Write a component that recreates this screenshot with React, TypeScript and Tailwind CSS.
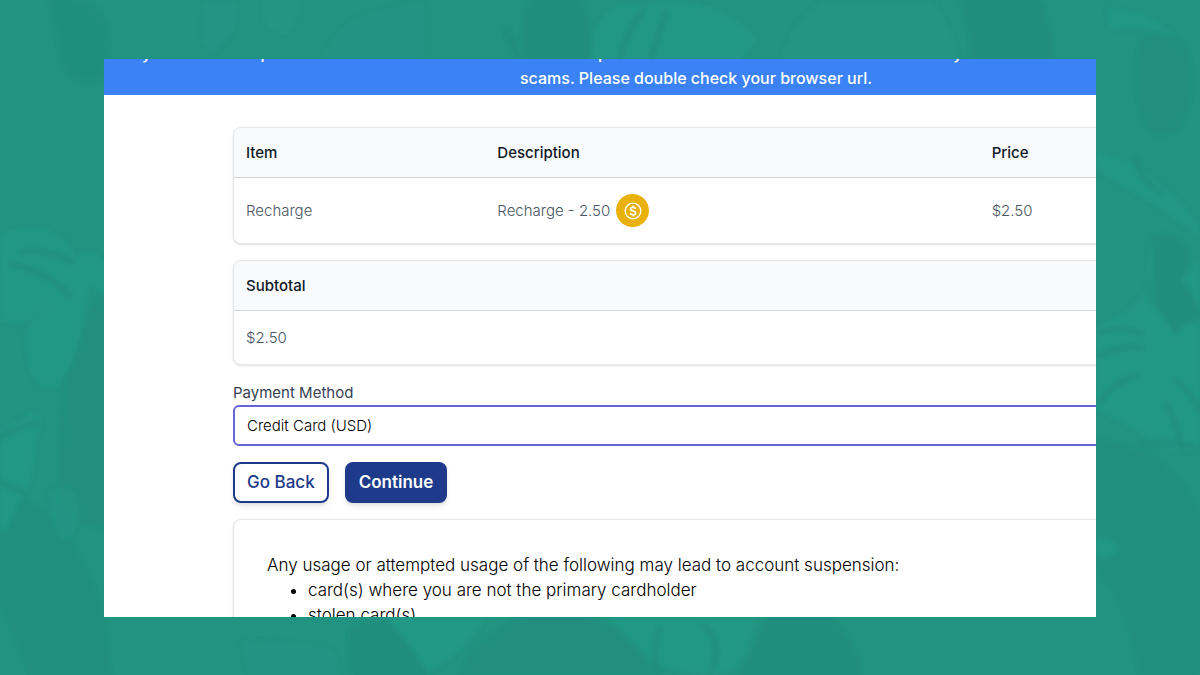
import type { ReactNode } from "react";

const items = [{ name: "Recharge", description: "Recharge - 2.50", price: "$2.50" }];

const methods = ["Credit Card (USD)"];

const prohibited = ["card(s) where you are not the primary cardholder", "stolen card(s)"];

// Tropical leaves behind the page, slightly lighter or darker than the base green.
function Leaves() {
  return (
    <svg
      aria-hidden="true"
      className="absolute inset-0 size-full"
      viewBox="0 0 1200 675"
      preserveAspectRatio="xMidYMid slice"
    >
      <defs>
        <filter id="soft" x="-5%" y="-5%" width="110%" height="110%">
          <feGaussianBlur stdDeviation="2" />
        </filter>
      </defs>
      <g filter="url(#soft)" opacity=".8">
        <g fill="#228c7c">
          <path d="M50 0q40-6 55 20 10 30-4 60-30 10-40-20z" opacity=".6" />
          <path d="M530 0h50q14 30 12 60h-66q-8-30 4-60z" />
          <path d="M960 0h80q10 30 14 60h-84q4-30-10-60z" />
          <path d="M85 320q20-34 24-30v240q-50-10-50-40 4-60 4-110z" opacity=".7" />
          <path d="M1140 40q60-20 50 60-10 40-34 34-28-20-16-94z" opacity=".7" />
          <path d="M1152 236q30-6 36 20 0 30 14 60l-26 20-18-24z" />
          <path d="M350 630q30-13 50-13 24 30 28 58h-78z" />
          <path d="M520 617h70q50 20 60 58H460q10-30 60-58z" opacity=".7" />
          <path d="M770 617h60q30 30 30 58H740z" />
          <path d="M0 490q60 20 80 70 26 40 30 115H30L0 600z" opacity=".5" />
          <path d="M1096 440q80 10 104 80v155h-60q-10-70-44-110z" opacity=".5" />
        </g>
        <g fill="#239987">
          <path d="M0 234c36-12 64-6 76 22 12-8 24-4 33 10v30l-20-10c-4 40-14 84-34 102-22 4-32-20-28-62L48 306 22 326 0 320z" />
          <path d="M0 430l36-20 6 8-8 40q-2 30-10 36L0 480z" />
          <path d="M0 486l22 8-14 34-8 4z" />
          <path d="M48 490q30-10 31 20-2 30-16 30-12-4-15-50z" opacity=".5" />
          <path d="M205 0l32 4q0 20-6 32l-18 18q-14-14-12-24z" opacity=".7" />
          <path d="M262 0h40q-6 24-14 34-20 0-24-14z" opacity=".6" />
          <path d="M320 62q16-40 50-50l54-10v60z" opacity=".5" />
          <path d="M590 62q0-50 34-58l46-4q60 4 88 40l-20 22z" />
          <path d="M780 62q14-50 44-60h110q20 30 26 60z" opacity=".6" />
          <path d="M1106 8q40 0 70 28-30-10-66-6z" />
          <path d="M1096 150q60 16 104 76v12q-50-40-104-66z" />
          <path d="M1150 240q4 30-6 54-24 26-48 30v86q30 12 60 34 20 10 44 6V320q-24 4-24 18-10-26-30-36z" />
          <path d="M1182 280q12-20 18-22v50z" />
          <path d="M1096 536q20 4 22 14-10 12-22 6z" />
          <path d="M386 617h100q-14 30-58 56-20-30-42-56z" />
          <path d="M610 617h150q-10 30-24 52-40 16-84-8-20-20-42-44z" />
          <path d="M240 640q60 0 94 10l6 25h-90z" opacity=".5" />
        </g>
        <g fill="none" stroke="#228b7b" strokeWidth="4" strokeLinecap="round">
          <path d="M12 264q40 10 58 32M20 252q30-4 52 10M0 438q14-12 38-14M0 482l24 10" />
          <path d="M1100 332q20-6 42 2M1100 356q20-12 42-8M1100 402q14-20 36-26M1166 404q12 20 16 44M1176 380q16 14 24 30M1140 444q30-4 60 4" />
          <path d="M620 60q6-30 24-50M650 60l16-48M660 628q-10 24-2 46M704 625q20 20 8 44" />
          <path d="M506 30l14 30M1136 160q0 14 24 32" />
        </g>
      </g>
    </svg>
  );
}

function Coin() {
  return (
    <span className="flex size-[33px] items-center justify-center rounded-full bg-[#e9b10b] text-white">
      <svg aria-hidden="true" viewBox="0 0 24 24" fill="none" stroke="currentColor" className="size-5">
        <circle cx="12" cy="12" r="9.4" strokeWidth="1.6" />
        <path
          d="M15 9.4C14.6 8.2 13.5 7.6 12 7.6c-1.8 0-3 .8-3 2.1 0 3.1 6.2 1.5 6.2 4.6 0 1.3-1.3 2.2-3.2 2.2-1.7 0-2.9-.7-3.3-2M12 5.6v2M12 16.4v2"
          strokeWidth="2"
        />
      </svg>
    </span>
  );
}

function Banner() {
  return (
    <div className="bg-[#3b82f6] pb-1 text-center text-base leading-[25px] font-medium text-white">
      <p>
        Any other online operators that do not match the trusted store presented here on this
        official notice board may contain unsafe links and are considered
        <br />
        scams. Please double check your browser url.
      </p>
    </div>
  );
}

function Card({ children }: { children: ReactNode }) {
  return (
    <div className="overflow-hidden rounded-lg border border-gray-200 bg-white shadow-sm">
      {children}
    </div>
  );
}

const th = "px-3 py-3 text-left font-medium text-gray-900";
const td = "px-3 text-gray-600";

function Checkout() {
  return (
    <form className="flex flex-col gap-4 px-[129px] pt-8 text-[15px] leading-[25px] font-light">
      <Card>
        <table className="w-full table-fixed">
          <thead className="border-b border-gray-300 bg-slate-50">
            <tr>
              <th className={`w-[27.2%] ${th}`}>Item</th>
              <th className={`w-[53.5%] ${th}`}>Description</th>
              <th className={th}>Price</th>
            </tr>
          </thead>
          <tbody>
            {items.map((item) => (
              <tr key={item.name}>
                <td className={`py-4 ${td}`}>{item.name}</td>
                <td className={`py-4 ${td}`}>
                  <span className="flex items-center gap-1.5">
                    {item.description}
                    <Coin />
                  </span>
                </td>
                <td className={`py-4 ${td}`}>{item.price}</td>
              </tr>
            ))}
          </tbody>
        </table>
      </Card>

      <Card>
        <table className="w-full">
          <thead className="border-b border-gray-300 bg-slate-50">
            <tr>
              <th className={th}>Subtotal</th>
            </tr>
          </thead>
          <tbody>
            <tr>
              <td className={`py-[14px] ${td}`}>$2.50</td>
            </tr>
          </tbody>
        </table>
      </Card>

      <div>
        <label htmlFor="method" className="block leading-6 font-normal text-gray-700">
          Payment Method
        </label>
        <select
          id="method"
          className="block h-[41px] w-full appearance-none rounded-md border-2 border-[#6663dc] bg-white px-3 text-black outline-none"
        >
          {methods.map((m) => (
            <option key={m}>{m}</option>
          ))}
        </select>
      </div>

      <div className="flex gap-4 text-[17px] leading-[23px]">
        <button
          type="button"
          className="rounded-lg border-2 border-[#1e3a8a] bg-white px-3 py-[7px] font-medium text-[#1e3a8a] shadow-md"
        >
          Go Back
        </button>
        <button
          type="submit"
          className="rounded-lg border-2 border-[#1e3a8a] bg-[#1e3a8a] px-3 py-[7px] font-semibold text-white shadow-md"
        >
          Continue
        </button>
      </div>

      <Card>
        <div className="p-[33px] text-[17px] leading-[25px] text-black">
          <p>Any usage or attempted usage of the following may lead to account suspension:</p>
          <ul className="list-disc pl-[41px]">
            {prohibited.map((line) => (
              <li key={line}>{line}</li>
            ))}
          </ul>
        </div>
      </Card>
    </form>
  );
}

export default function App() {
  return (
    <div className="relative flex h-screen flex-col overflow-hidden bg-[#229281] px-[104px] pt-[59px] pb-[58px] font-['Inter',sans-serif]">
      <Leaves />
      <main className="relative min-h-0 flex-1 overflow-hidden bg-white">
        <div className="-mt-[18px] w-[calc(100%+192px)]">
          <Banner />
          <Checkout />
        </div>
      </main>
    </div>
  );
}
